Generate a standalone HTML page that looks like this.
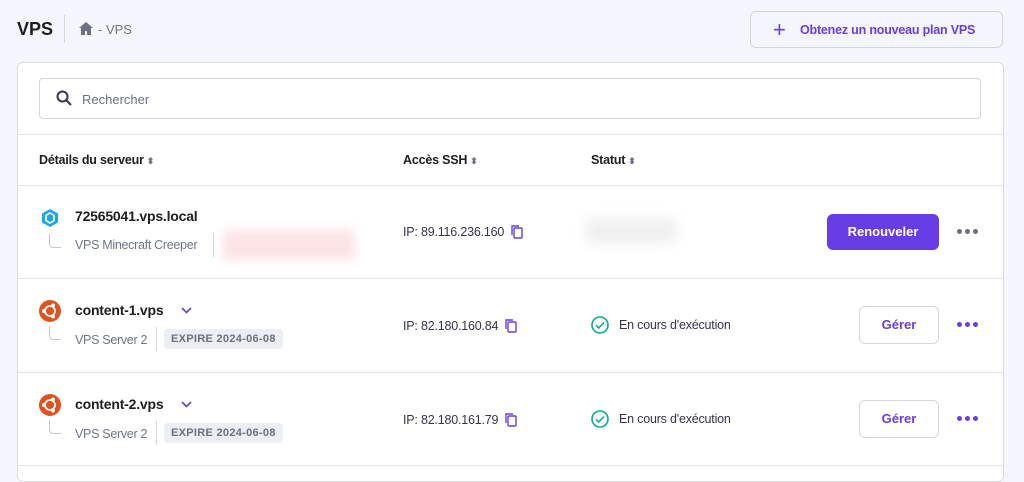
<!DOCTYPE html>
<html><head><meta charset="utf-8"><style>
*{box-sizing:border-box;margin:0;padding:0}
body{width:1024px;height:470px;overflow:hidden;background:#f4f5ff;font-family:"Liberation Sans",sans-serif;color:#2f1c6a;position:relative}
.a{position:absolute}
.card{left:17px;top:62px;width:987px;height:420px;background:#fff;border:1px solid #dadce0;border-radius:6px}
.hr{position:absolute;left:18px;width:985px;height:1px;background:#e3e3e8}
.t{font-size:14px;color:#1d1e20;font-weight:bold;white-space:nowrap}
.s{font-size:13px;color:#727586;white-space:nowrap}
.ip{font-size:12.5px;color:#36344d;white-space:nowrap;display:flex;align-items:center;letter-spacing:-.2px}
.ip svg{margin-left:6px}
.badge{background:#eceef3;color:#6d7081;font-size:11px;font-weight:bold;border-radius:4px;padding:4px 7px;letter-spacing:.3px}
.btn{border-radius:6px;font-size:13px;font-weight:bold;text-align:center}
.dots{display:flex;gap:3px}
.dots i{width:5px;height:5px;border-radius:50%;display:block}
.sort{color:#6d7081;font-size:9px;margin-left:3px}
</style></head><body>
<div class="a" style="left:17px;top:19px;font-size:18px;font-weight:bold;color:#1d1e20">VPS</div>
<div class="a" style="left:64px;top:15px;width:1px;height:28px;background:#d5d6dc"></div>
<svg class="a" style="left:79px;top:22px" width="14" height="13" viewBox="0 0 14 13"><path d="M7 0L0 6h2v7h4V9h2v4h4V6h2z" fill="#6d7081"/></svg>
<div class="a s" style="left:98px;top:22px">- VPS</div>
<div class="a" style="left:750px;top:11px;width:253px;height:37px;border:1px solid #d5d6dc;border-radius:6px;background:#f4f5ff"></div>
<div class="a" style="left:773px;top:17px;font-size:22px;color:#673de6">+</div>
<div class="a" style="left:800px;top:23px;font-size:12.5px;font-weight:bold;color:#673de6;letter-spacing:-.2px">Obtenez un nouveau plan VPS</div>
<div class="a card"></div>
<div class="a" style="left:39px;top:78px;width:942px;height:41px;border:1px solid #d5d6dc;border-radius:4px"></div>
<svg class="a" style="left:56px;top:90px" width="16" height="16" viewBox="0 0 16 16"><circle cx="6.5" cy="6.5" r="5" fill="none" stroke="#36344d" stroke-width="2"/><path d="M10 10l5 5" stroke="#36344d" stroke-width="2"/></svg>
<div class="a s" style="left:82px;top:92px;color:#6d7081">Rechercher</div>
<div class="hr" style="top:134px"></div>
<div class="a t" style="left:39px;top:153px;font-size:12.5px;letter-spacing:-.2px">Détails du serveur<span class="sort">⬍</span></div>
<div class="a t" style="left:403px;top:153px;font-size:12.5px;letter-spacing:-.2px">Accès SSH<span class="sort">⬍</span></div>
<div class="a t" style="left:591px;top:153px;font-size:12.5px;letter-spacing:-.2px">Statut<span class="sort">⬍</span></div>
<div class="hr" style="top:185px"></div>
<!-- row1 -->
<svg class="a" style="left:40px;top:208px" width="20" height="20" viewBox="0 0 20 20"><path d="M10 1l8 4.5v9L10 19l-8-4.5v-9z" fill="#1fa6e8"/><path d="M10 5l4 2.5v5L10 15l-4-2.5v-5z" fill="none" stroke="#fff" stroke-width="1.6"/></svg>
<div class="a" style="left:49px;top:234px;width:12px;height:14px;border-left:1px solid #c5c7d0;border-bottom:1px solid #c5c7d0;border-bottom-left-radius:4px"></div>
<div class="a t" style="left:75px;top:208px;letter-spacing:-.2px">72565041.vps.local</div>
<div class="a s" style="left:75px;top:238px;font-size:12.5px;letter-spacing:-.3px">VPS Minecraft Creeper</div>
<div class="a" style="left:213px;top:233px;width:1px;height:24px;background:#d5d6dc"></div>
<div class="a" style="left:223px;top:230px;width:132px;height:30px;background:#fbe3e6;filter:blur(5px)"></div>
<div class="a ip" style="left:403px;top:224px">IP: 89.116.236.160<svg width="14" height="15" viewBox="0 0 14 15"><rect x="4" y="4" width="8" height="10" rx="1" fill="none" stroke="#673de6" stroke-width="1.4"/><path d="M2 11V2h7" fill="none" stroke="#673de6" stroke-width="1.4"/></svg></div>
<div class="a" style="left:586px;top:218px;width:90px;height:25px;background:#efefef;filter:blur(6px)"></div>
<div class="a btn" style="left:827px;top:214px;width:112px;height:36px;background:#673de6;color:#fff;line-height:36px">Renouveler</div>
<div class="a dots" style="left:957px;top:229px"><i style="background:#6d7081"></i><i style="background:#6d7081"></i><i style="background:#6d7081"></i></div>
<div class="hr" style="top:278px"></div>
<!-- row2 -->
<svg class="a" style="left:39px;top:300px" width="22" height="22" viewBox="0 0 22 22"><circle cx="11" cy="11" r="11" fill="#e0531f"/><circle cx="11" cy="11" r="5" fill="none" stroke="#fff" stroke-width="1.8"/><circle cx="5" cy="11" r="2" fill="#fff"/><circle cx="14" cy="5.5" r="2" fill="#fff"/><circle cx="14" cy="16.5" r="2" fill="#fff"/></svg>
<div class="a" style="left:49px;top:326px;width:12px;height:14px;border-left:1px solid #c5c7d0;border-bottom:1px solid #c5c7d0;border-bottom-left-radius:4px"></div>
<div class="a t" style="left:75px;top:302px;letter-spacing:-.2px">content-1.vps</div>
<svg class="a" style="left:181px;top:307px" width="11" height="7" viewBox="0 0 11 7"><path d="M1 1l4.5 4.5L10 1" fill="none" stroke="#673de6" stroke-width="1.6"/></svg>
<div class="a s" style="left:75px;top:333px;font-size:12.5px;letter-spacing:-.3px">VPS Server 2</div>
<div class="a" style="left:156px;top:327px;width:1px;height:24px;background:#d5d6dc"></div>
<div class="a badge" style="left:164px;top:329px">EXPIRE 2024-06-08</div>
<div class="a ip" style="left:403px;top:318px">IP: 82.180.160.84<svg width="14" height="15" viewBox="0 0 14 15"><rect x="4" y="4" width="8" height="10" rx="1" fill="none" stroke="#673de6" stroke-width="1.4"/><path d="M2 11V2h7" fill="none" stroke="#673de6" stroke-width="1.4"/></svg></div>
<svg class="a" style="left:591px;top:316px" width="18" height="18" viewBox="0 0 18 18"><circle cx="9" cy="9" r="8" fill="none" stroke="#00b090" stroke-width="1.6"/><path d="M5 9.3l2.7 2.7L13 6.5" fill="none" stroke="#00b090" stroke-width="1.6"/></svg>
<div class="a ip" style="left:619px;top:318px">En cours d'exécution</div>
<div class="a btn" style="left:859px;top:306px;width:80px;height:38px;border:1px solid #d5d6dc;color:#673de6;line-height:36px">Gérer</div>
<div class="a dots" style="left:957px;top:322px"><i style="background:#673de6"></i><i style="background:#673de6"></i><i style="background:#673de6"></i></div>
<div class="hr" style="top:372px"></div>
<!-- row3 -->
<svg class="a" style="left:39px;top:394px" width="22" height="22" viewBox="0 0 22 22"><circle cx="11" cy="11" r="11" fill="#e0531f"/><circle cx="11" cy="11" r="5" fill="none" stroke="#fff" stroke-width="1.8"/><circle cx="5" cy="11" r="2" fill="#fff"/><circle cx="14" cy="5.5" r="2" fill="#fff"/><circle cx="14" cy="16.5" r="2" fill="#fff"/></svg>
<div class="a" style="left:49px;top:420px;width:12px;height:14px;border-left:1px solid #c5c7d0;border-bottom:1px solid #c5c7d0;border-bottom-left-radius:4px"></div>
<div class="a t" style="left:75px;top:396px;letter-spacing:-.2px">content-2.vps</div>
<svg class="a" style="left:181px;top:401px" width="11" height="7" viewBox="0 0 11 7"><path d="M1 1l4.5 4.5L10 1" fill="none" stroke="#673de6" stroke-width="1.6"/></svg>
<div class="a s" style="left:75px;top:427px;font-size:12.5px;letter-spacing:-.3px">VPS Server 2</div>
<div class="a" style="left:156px;top:421px;width:1px;height:24px;background:#d5d6dc"></div>
<div class="a badge" style="left:164px;top:423px">EXPIRE 2024-06-08</div>
<div class="a ip" style="left:403px;top:412px">IP: 82.180.161.79<svg width="14" height="15" viewBox="0 0 14 15"><rect x="4" y="4" width="8" height="10" rx="1" fill="none" stroke="#673de6" stroke-width="1.4"/><path d="M2 11V2h7" fill="none" stroke="#673de6" stroke-width="1.4"/></svg></div>
<svg class="a" style="left:591px;top:410px" width="18" height="18" viewBox="0 0 18 18"><circle cx="9" cy="9" r="8" fill="none" stroke="#00b090" stroke-width="1.6"/><path d="M5 9.3l2.7 2.7L13 6.5" fill="none" stroke="#00b090" stroke-width="1.6"/></svg>
<div class="a ip" style="left:619px;top:412px">En cours d'exécution</div>
<div class="a btn" style="left:859px;top:400px;width:80px;height:38px;border:1px solid #d5d6dc;color:#673de6;line-height:36px">Gérer</div>
<div class="a dots" style="left:957px;top:416px"><i style="background:#673de6"></i><i style="background:#673de6"></i><i style="background:#673de6"></i></div>
<div class="hr" style="top:465px"></div>
</body></html>
